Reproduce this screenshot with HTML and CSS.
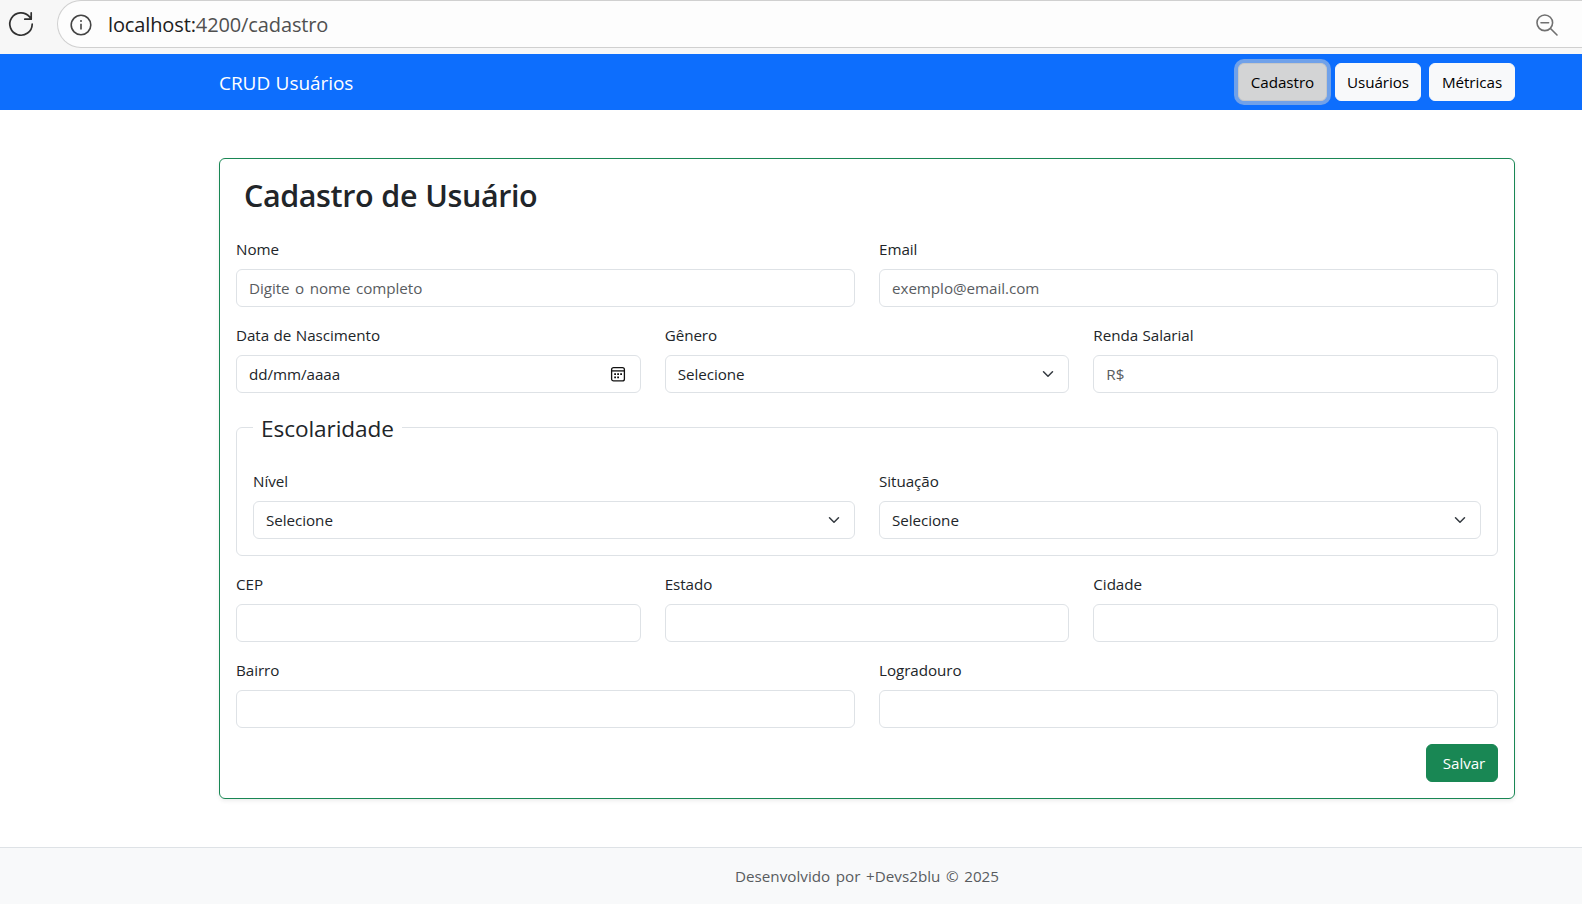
FILE: index.html
```
<!DOCTYPE html>
<html lang="pt-BR">
<head>
<meta charset="utf-8">
<title>Cadastro de Usuário</title>
<link rel="stylesheet" href="styles.css">
</head>
<body>
<div class="toolbar">
  <svg class="reload" width="28" height="28" viewBox="0 0 28 28" fill="none" stroke="#303030" stroke-width="1.7" stroke-linecap="round" stroke-linejoin="round"><path d="M25.2 14.2A11.2 11.2 0 1 1 22.4 6.6L24.2 8.8M24.2 2.8V9.2H17.8"/></svg>
  <div class="address">
    <svg class="info" width="22" height="22" viewBox="0 0 22 22" fill="none" stroke="#444" stroke-width="1.6"><circle cx="11" cy="11" r="9.8"/><path d="M11 9.8V15.4"/><circle cx="11" cy="7" r="1" fill="#444" stroke="none"/></svg>
    <span class="url"><span class="host">localhost:</span>4200/cadastro</span>
    <svg class="zoom" width="24" height="24" viewBox="0 0 24 24" fill="none" stroke="#707070" stroke-width="1.6" stroke-linecap="round"><circle cx="9.8" cy="9.8" r="7.8"/><path d="M6 9.8H13.6M15.5 15.5L22 22"/></svg>
  </div>
</div>
<div class="page">
  <nav class="navbar">
    <div class="container nav-inner">
      <a class="brand">CRUD Usuários</a>
      <div class="nav-buttons">
        <button class="btn btn-light first active">Cadastro</button>
        <button class="btn btn-light">Usuários</button>
        <button class="btn btn-light">Métricas</button>
      </div>
    </div>
  </nav>
  <main class="container main">
    <form class="card">
      <h2 class="title">Cadastro de Usuário</h2>
      <div class="row two">
        <div><label>Nome</label><input class="control" placeholder="Digite o nome completo"></div>
        <div><label>Email</label><input class="control" placeholder="exemplo@email.com"></div>
      </div>
      <div class="row three">
        <div><label>Data de Nascimento</label><div class="control date"><span>dd/mm/aaaa</span>
          <svg width="16" height="16" viewBox="0 0 16 16" fill="none" stroke="#111" stroke-width="1.3"><rect x="1.6" y="1.6" width="12.8" height="13.3" rx="2"/><path d="M1.6 4.9H14.4"/><path d="M4.2 8.2H12M4.2 11.3H9.2" stroke-width="1.7" stroke-dasharray="1.8 1.2"/></svg></div></div>
        <div><label>Gênero</label><div class="control select"><span>Selecione</span><svg width="16" height="12" viewBox="0 0 16 16" fill="none" stroke="#343a40" stroke-width="2" stroke-linecap="round" stroke-linejoin="round"><path d="m2 5 6 6 6-6"/></svg></div></div>
        <div><label>Renda Salarial</label><input class="control" placeholder="R$"></div>
      </div>
      <fieldset class="group">
        <legend>Escolaridade</legend>
        <div class="row two">
          <div><label>Nível</label><div class="control select"><span>Selecione</span><svg width="16" height="12" viewBox="0 0 16 16" fill="none" stroke="#343a40" stroke-width="2" stroke-linecap="round" stroke-linejoin="round"><path d="m2 5 6 6 6-6"/></svg></div></div>
          <div><label>Situação</label><div class="control select"><span>Selecione</span><svg width="16" height="12" viewBox="0 0 16 16" fill="none" stroke="#343a40" stroke-width="2" stroke-linecap="round" stroke-linejoin="round"><path d="m2 5 6 6 6-6"/></svg></div></div>
        </div>
      </fieldset>
      <div class="row three">
        <div><label>CEP</label><input class="control"></div>
        <div><label>Estado</label><input class="control"></div>
        <div><label>Cidade</label><input class="control"></div>
      </div>
      <div class="row two">
        <div><label>Bairro</label><input class="control"></div>
        <div><label>Logradouro</label><input class="control"></div>
      </div>
      <div class="actions"><button type="button" class="btn btn-success">Salvar</button></div>
    </form>
  </main>
  <footer class="footer">Desenvolvido por +Devs2blu © 2025</footer>
</div>
</body>
</html>
```
FILE: styles.css
```
* { box-sizing: border-box; }
html, body { margin: 0; height: 904px; overflow: hidden; }
body {
  font-family: "Open Sans", "Noto Sans", sans-serif;
  font-size: 15.2px;
  line-height: 24px;
  letter-spacing: -0.05px;
  word-spacing: 0.6px;
  color: #212529;
  background: #fff;
}
input, button { font: inherit; letter-spacing: inherit; word-spacing: inherit; }

/* Browser toolbar */
.toolbar { display: flex; height: 54px; background: #f7f7f7; padding-left: 7px; }
.reload { margin-top: 10px; flex: none; }
.address {
  display: flex; align-items: center; flex: 1;
  height: 48px; margin-left: 22px; padding: 1px 23px 0 12px;
  border: 1.5px solid #d0d0d0; border-right: 0;
  border-radius: 24px 0 0 24px; background: #fdfdfd;
}
.info { flex: none; }
.url { margin-left: 16px; padding-top: 1px; font-size: 20px; letter-spacing: -0.12px; color: #505050; }
.host { color: #202020; }
.zoom { margin-left: auto; }

.page { display: flex; flex-direction: column; height: 850px; }
.container { width: 1296px; margin-left: 219px; }
.navbar { height: 56px; background: #0d6efd; }
.nav-inner { display: flex; align-items: center; justify-content: space-between; height: 56px; }
.brand { padding-top: 2px; font-size: 19px; color: #fff; line-height: 30px; }
.nav-buttons { display: flex; gap: 8px; }
.btn { height: 38px; padding: 0; border: 1px solid; border-radius: 6px; white-space: nowrap; }
.btn-light { width: 86px; background: #f8f9fa; border-color: #f8f9fa; color: #000; }
.btn-light.first { width: 89px; }
.btn-light.active { background: #d3d4d5; border-color: #c6c7c8; box-shadow: 0 0 0 4px rgba(211, 212, 213, .5); }

.main { margin-top: 48px; }
.card {
  display: flex; flex-direction: column; gap: 16px;
  height: 641px; padding: 16px;
  border: 1px solid #198754; border-radius: 6px;
  box-shadow: 0 2px 4px rgba(0, 0, 0, .075);
}
.title { margin: 0 0 8px 8px; height: 38px; font-size: 30.5px; line-height: 40px; font-weight: 600; letter-spacing: -0.4px; }
.row { display: grid; column-gap: 24px; }
.two { grid-template-columns: repeat(2, 1fr); }
.three { grid-template-columns: repeat(3, 1fr); }
label { display: block; margin-bottom: 8px; }
.control {
  display: flex; align-items: center; justify-content: space-between;
  width: 100%; height: 38px; padding: 0 12px;
  border: 1px solid #dee2e6; border-radius: 6px; background: #fff; color: #212529;
}
.control::placeholder { color: #595c5f; opacity: 1; word-spacing: 1.6px; }
.date { padding-right: 14px; }
.group { margin: 0; min-width: 0; padding: 24px 16px 16px; border: 1px solid #dee2e6; border-radius: 6px; }
legend { height: 36px; padding: 0 8px; font-size: 22.6px; line-height: 39px; letter-spacing: -0.08px; }
.actions { display: flex; justify-content: flex-end; }
.btn-success { width: 72px; padding-left: 4px; background: #198754; border-color: #198754; color: #fff; }
.footer {
  flex: 1; margin-top: 48px; padding: 16px 0 0 152px;
  border-top: 1px solid #dee2e6; background: #f8f9fa;
  text-align: center; color: #595c5f;
  letter-spacing: 0.02px; word-spacing: 1.6px;
}
```
